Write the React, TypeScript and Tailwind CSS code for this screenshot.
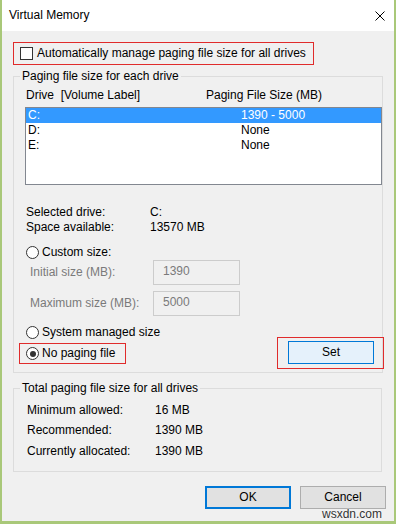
import React from "react";

const drives = [
  { drive: "C:", size: "1390 - 5000", selected: true },
  { drive: "D:", size: "None", selected: false },
  { drive: "E:", size: "None", selected: false },
];

const totals = [
  { label: "Minimum allowed:", value: "16 MB" },
  { label: "Recommended:", value: "1390 MB" },
  { label: "Currently allocated:", value: "1390 MB" },
];

const Radio = ({ checked = false }: { checked?: boolean }) => (
  <span className="flex h-[13px] w-[13px] shrink-0 items-center justify-center rounded-full border border-[#333333] bg-white">
    {checked && <span className="h-[6px] w-[6px] rounded-full bg-[#333333]" />}
  </span>
);

const SizeInput = ({ label, value, className = "" }: { label: string; value: string; className?: string }) => (
  <div className={"flex h-[25px] items-center " + className}>
    <span className="w-[128px] pl-[5px] text-[#7a7a7a]">{label}</span>
    <div className="flex h-[25px] w-[87px] items-center border border-[#cccccc] bg-[#f0f0f0] pb-[2px] pl-[9px] text-[#7a7a7a]">
      {value}
    </div>
  </div>
);

const App = () => {
  return (
    <div className="relative flex h-[524px] w-[396px] flex-col whitespace-nowrap border-b-[3px] border-l-2 border-r-2 border-[#a9c879] bg-[#f0f0f0] font-['Liberation_Sans',Arial,sans-serif] text-[12px] leading-[15px] text-black">
      {/* title bar */}
      <div className="flex h-[31px] shrink-0 items-center justify-between bg-white pl-[7px] pr-[9px]">
        <span>Virtual Memory</span>
        <svg width="10" height="10" viewBox="0 0 10 10">
          <path d="M0.5 0.5 L9.5 9.5 M9.5 0.5 L0.5 9.5" stroke="#000" strokeWidth="1" />
        </svg>
      </div>

      <div className="flex flex-col pl-[11px] pr-[12px]">
        <div className="mt-[11px] flex h-[23px] w-[301px] items-center gap-[4px] border border-[#e02b2b] pl-[6px]">
          <span className="h-[13px] w-[13px] shrink-0 border border-[#333333] bg-white" />
          <span>Automatically manage paging file size for all drives</span>
        </div>

        <fieldset className="mt-[3px] border border-[#dcdcdc] pb-[3px]">
          <legend className="ml-[6px] px-[2px] leading-[16px]">Paging file size for each drive</legend>
          <div className="flex flex-col pl-[11px]">
            <div className="mt-[3px] flex h-[16px] items-center">
              <span className="w-[181px] pl-[1px]">Drive&nbsp;&nbsp;[Volume Label]</span>
              <span>Paging File Size (MB)</span>
            </div>
            <div className="mt-[4px] h-[78px] w-[357px] border border-[#828790] bg-white">
              {drives.map((d) => (
                <div
                  key={d.drive}
                  className={
                    "flex h-[15px] items-center " + (d.selected ? "bg-[#3399ff] text-white" : "")
                  }
                >
                  <span className="w-[215px] pl-[2px]">{d.drive}</span>
                  <span>{d.size}</span>
                </div>
              ))}
            </div>

            <div className="mt-[20px] flex flex-col">
              <div className="flex h-[15px] items-center">
                <span className="w-[125px] pl-[1px]">Selected drive:</span>
                <span>C:</span>
              </div>
              <div className="flex h-[15px] items-center">
                <span className="w-[125px] pl-[1px]">Space available:</span>
                <span>13570 MB</span>
              </div>
            </div>

            <div className="mt-[10px] flex h-[15px] items-center gap-[3px] pl-[1px]">
              <Radio />
              <span>Custom size:</span>
            </div>
            <SizeInput label="Initial size (MB):" value="1390" />
            <SizeInput label="Maximum size (MB):" value="5000" className="mt-[6px]" />

            <div className="mt-[6px] flex items-start justify-between">
              <div className="flex flex-col pt-[3px]">
                <div className="flex h-[15px] items-center gap-[3px] pl-[1px]">
                  <Radio />
                  <span>System managed size</span>
                </div>
                <div className="-ml-[6px] mt-[3px] flex h-[21px] w-[107px] items-center gap-[3px] border border-[#e02b2b] pl-[6px]">
                  <Radio checked />
                  <span>No paging file</span>
                </div>
              </div>
              <div className="-mr-[2px] mt-[15px] h-[32px] w-[107px] border border-[#e02b2b] pl-[10px] pt-[3px]">
                <button className="flex h-[23px] w-[86px] items-center justify-center border border-[#0078d7] bg-[#e5f1fb]">
                  Set
                </button>
              </div>
            </div>
          </div>
        </fieldset>

        <fieldset className="mt-[7px] border border-[#dcdcdc]">
          <legend className="ml-[6px] px-[2px] leading-[16px]">Total paging file size for all drives</legend>
          <div className="flex flex-col pb-[9.5px] pl-[13px] pt-[4px]">
            {totals.map((t) => (
              <div key={t.label} className="flex h-[20.5px] items-center">
                <span className="w-[128px]">{t.label}</span>
                <span>{t.value}</span>
              </div>
            ))}
          </div>
        </fieldset>

        <div className="-mr-[4px] mt-[14px] flex justify-end gap-[9px]">
          <button className="flex h-[23px] w-[86px] items-center justify-center border-2 border-[#0078d7] bg-[#e1e1e1]">
            OK
          </button>
          <button className="flex h-[23px] w-[86px] items-center justify-center border border-[#adadad] bg-[#e1e1e1]">
            Cancel
          </button>
        </div>
      </div>

      <span className="absolute left-[320px] top-[506px] text-[12px] leading-[16px] text-[#333333] [text-shadow:0_0_2px_#ffffff]">
        wsxdn.com
      </span>
    </div>
  );
};

export default App;
